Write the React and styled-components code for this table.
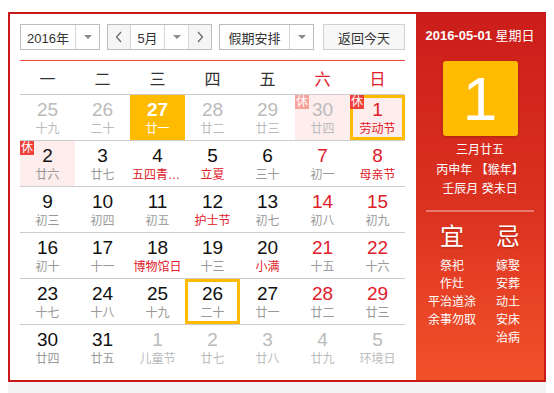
import React from "react";
import styled, { createGlobalStyle } from "styled-components";

const GlobalStyle = createGlobalStyle`
    body {
        margin: 0;
        background: #fff;
        font-family: "Liberation Sans", "Noto Sans CJK SC", sans-serif;
    }
`

const Page = styled.div`
    padding: 12px 8px 0 8px;
    width: 538px;
`

const Frame = styled.div`
    box-sizing: border-box;
    width: 538px;
    height: 370px;
    border: 2px solid #c9191a;
    display: flex;
`

const Footer = styled.div`
    height: 12px;
    background: #f4f4f4;
`

const LeftPanel = styled.div`
    width: 406px;
    padding: 10px 11px 0 10px;
    box-sizing: border-box;
    background: #fff;
`

const Toolbar = styled.div`
    display: flex;
    height: 26px;
`

const Select = styled.div`
    box-sizing: border-box;
    display: flex;
    width: ${p => p.$w}px;
    height: 26px;
    margin-right: ${p => p.$mr || 0}px;
    border: 1px solid #bcbcbc;
    background: #fff;
    font-size: 13px;
    color: #333;
`

const SelectLabel = styled.div`
    flex: 1;
    display: flex;
    align-items: center;
    justify-content: center;
`

const Caret = styled.div`
    width: 23px;
    border-left: 1px solid #d6d6d6;
    display: flex;
    align-items: center;
    justify-content: center;
    &::after {
        content: "";
        border-left: 4px solid transparent;
        border-right: 4px solid transparent;
        border-top: 4px solid #8a8a8a;
    }
`

const Arrow = styled.div`
    width: 22px;
    background: #f5f5f5;
    display: flex;
    align-items: center;
    justify-content: center;
    border-left: ${p => (p.$right ? "1px solid #d6d6d6" : "none")};
    border-right: ${p => (p.$right ? "none" : "1px solid #d6d6d6")};
`

const TodayButton = styled.div`
    box-sizing: border-box;
    width: 82px;
    height: 26px;
    border: 1px solid #d0d0d0;
    background: #f7f7f7;
    font-size: 13px;
    color: #333;
    display: flex;
    align-items: center;
    justify-content: center;
`

const RedRule = styled.div`
    margin-top: 10px;
    height: 1px;
    background: #ec4a3d;
`

const WeekHead = styled.div`
    display: grid;
    grid-template-columns: repeat(7, 55px);
    height: 33px;
    border-bottom: 1px solid #cccccc;
`

const HeadCell = styled.div`
    display: flex;
    align-items: center;
    justify-content: center;
    font-size: 16px;
    color: ${p => (p.$weekend ? "#e0202a" : "#333")};
`

const Week = styled.div`
    display: grid;
    grid-template-columns: repeat(7, 55px);
    height: 46px;
    box-sizing: border-box;
    border-bottom: ${p => (p.$last ? "none" : "1px solid #cccccc")};
`

const Cell = styled.div`
    position: relative;
    box-sizing: border-box;
    padding-top: 4px;
    text-align: center;
    background: ${p => (p.$today ? "#ffbb00" : p.$rest ? "#fdeded" : "#fff")};
    box-shadow: ${p => (p.$ring ? "inset 0 0 0 3px #ffbb00" : "none")};
`

const DayNum = styled.div`
    font-size: 19px;
    line-height: 22px;
    font-weight: ${p => (p.$today ? "bold" : "normal")};
    color: ${p => p.$color};
`

const Lunar = styled.div`
    font-size: 12px;
    line-height: 16px;
    padding: 0 2px;
    white-space: nowrap;
    overflow: hidden;
    text-overflow: ellipsis;
    color: ${p => p.$color};
`

const RestBadge = styled.div`
    position: absolute;
    left: 0;
    top: 0;
    width: 14px;
    height: 14px;
    background: ${p => (p.$faded ? "#f7a39c" : "#f0403a")};
    color: #fff;
    font-size: 12px;
    line-height: 14px;
    text-align: center;
`

const RightPanel = styled.div`
    flex: 1;
    background: linear-gradient(180deg, #cb1d1a 0%, #dc3320 55%, #f2522a 100%);
    color: #fff;
    display: flex;
    flex-direction: column;
    align-items: center;
`

const DateLine = styled.div`
    margin-top: 13px;
    font-size: 13px;
    line-height: 18px;
    white-space: nowrap;
`

const BigDay = styled.div`
    margin-top: 16px;
    width: 75px;
    height: 75px;
    border-radius: 3px;
    background: #ffbb00;
    box-shadow: 0 1px 3px rgba(120, 20, 0, 0.45);
    display: flex;
    align-items: center;
    justify-content: center;
    font-size: 62px;
    color: #fff;
`

const LunarInfo = styled.div`
    margin-top: 5px;
    font-size: 12px;
    line-height: 19.5px;
    text-align: center;
`

const Divider = styled.div`
    align-self: stretch;
    margin: 10px 10px 0 10px;
    height: 2px;
    background: rgba(255, 255, 255, 0.35);
`

const Advice = styled.div`
    display: flex;
    justify-content: center;
    margin-top: 10px;
`

const AdviceCol = styled.div`
    width: 56px;
    text-align: center;
`

const AdviceTitle = styled.div`
    font-size: 24px;
    line-height: 30px;
    margin-bottom: 5px;
    text-shadow: 0 1px 2px rgba(120, 20, 0, 0.4);
`

const AdviceItem = styled.div`
    font-size: 12px;
    line-height: 18px;
    white-space: nowrap;
`

const Chevron = ({ dir }) => (
    <svg width="8" height="12" viewBox="0 0 8 12">
        <polyline
            points={dir === "left" ? "6,1 1.5,6 6,11" : "2,1 6.5,6 2,11"}
            fill="none"
            stroke="#666"
            strokeWidth="1.2"
        />
    </svg>
)

const RED = "#e0202a"
const GRAY = "#999"
const FADED = "#bbb"

// d: day, l: lunar, o: other month, f: festival (red), w: weekend, r: rest badge
const weeks = [
    [
        { d: 25, l: "十九", o: 1 }, { d: 26, l: "二十", o: 1 }, { d: 27, l: "廿一", o: 1, today: 1 },
        { d: 28, l: "廿二", o: 1 }, { d: 29, l: "廿三", o: 1 }, { d: 30, l: "廿四", o: 1, r: 1 },
        { d: 1, l: "劳动节", f: 1, w: 1, r: 1, ring: 1 },
    ],
    [
        { d: 2, l: "廿六", r: 1 }, { d: 3, l: "廿七" }, { d: 4, l: "五四青年节", f: 1 },
        { d: 5, l: "立夏", f: 1 }, { d: 6, l: "三十" }, { d: 7, l: "初一", w: 1 },
        { d: 8, l: "母亲节", f: 1, w: 1 },
    ],
    [
        { d: 9, l: "初三" }, { d: 10, l: "初四" }, { d: 11, l: "初五" },
        { d: 12, l: "护士节", f: 1 }, { d: 13, l: "初七" }, { d: 14, l: "初八", w: 1 },
        { d: 15, l: "初九", w: 1 },
    ],
    [
        { d: 16, l: "初十" }, { d: 17, l: "十一" }, { d: 18, l: "博物馆日", f: 1 },
        { d: 19, l: "十三" }, { d: 20, l: "小满", f: 1 }, { d: 21, l: "十五", w: 1 },
        { d: 22, l: "十六", w: 1 },
    ],
    [
        { d: 23, l: "十七" }, { d: 24, l: "十八" }, { d: 25, l: "十九" },
        { d: 26, l: "二十", ring: 1 }, { d: 27, l: "廿一" }, { d: 28, l: "廿二", w: 1 },
        { d: 29, l: "廿三", w: 1 },
    ],
    [
        { d: 30, l: "廿四" }, { d: 31, l: "廿五" }, { d: 1, l: "儿童节", o: 1 },
        { d: 2, l: "廿七", o: 1 }, { d: 3, l: "廿八", o: 1 }, { d: 4, l: "廿九", o: 1 },
        { d: 5, l: "环境日", o: 1 },
    ],
]

const numColor = c => {
    if (c.today) return "#fff"
    if (c.o) return FADED
    if (c.w) return RED
    return "#111"
}

const lunarColor = c => {
    if (c.today) return "#fff"
    if (c.o) return FADED
    if (c.f) return RED
    return GRAY
}

const DayCell = ({ c }) => (
    <Cell $today={c.today} $rest={c.r} $ring={c.ring}>
        {c.r ? <RestBadge $faded={c.o}>休</RestBadge> : null}
        <DayNum $today={c.today} $color={numColor(c)}>{c.d}</DayNum>
        <Lunar $color={lunarColor(c)}>{c.l}</Lunar>
    </Cell>
)

const App = () => (
    <Page>
        <GlobalStyle />
        <Frame>
            <LeftPanel>
                <Toolbar>
                    <Select $w={80} $mr={7}>
                        <SelectLabel>2016年</SelectLabel>
                        <Caret />
                    </Select>
                    <Select $w={105} $mr={7}>
                        <Arrow><Chevron dir="left" /></Arrow>
                        <SelectLabel>5月</SelectLabel>
                        <Caret />
                        <Arrow $right><Chevron dir="right" /></Arrow>
                    </Select>
                    <Select $w={95} $mr={9}>
                        <SelectLabel>假期安排</SelectLabel>
                        <Caret />
                    </Select>
                    <TodayButton>返回今天</TodayButton>
                </Toolbar>
                <RedRule />
                <WeekHead>
                    {["一", "二", "三", "四", "五", "六", "日"].map((w, i) => (
                        <HeadCell key={w} $weekend={i > 4}>{w}</HeadCell>
                    ))}
                </WeekHead>
                {weeks.map((week, i) => (
                    <Week key={i} $last={i === weeks.length - 1}>
                        {week.map((c, j) => <DayCell key={j} c={c} />)}
                    </Week>
                ))}
            </LeftPanel>
            <RightPanel>
                <DateLine><b>2016-05-01</b> 星期日</DateLine>
                <BigDay>1</BigDay>
                <LunarInfo>
                    <div>三月廿五</div>
                    <div>丙申年 【猴年】</div>
                    <div>壬辰月 癸未日</div>
                </LunarInfo>
                <Divider />
                <Advice>
                    <AdviceCol>
                        <AdviceTitle>宜</AdviceTitle>
                        {["祭祀", "作灶", "平治道涂", "余事勿取"].map(t => <AdviceItem key={t}>{t}</AdviceItem>)}
                    </AdviceCol>
                    <AdviceCol>
                        <AdviceTitle>忌</AdviceTitle>
                        {["嫁娶", "安葬", "动土", "安床", "治病"].map(t => <AdviceItem key={t}>{t}</AdviceItem>)}
                    </AdviceCol>
                </Advice>
            </RightPanel>
        </Frame>
        <Footer />
    </Page>
)

export default App;
